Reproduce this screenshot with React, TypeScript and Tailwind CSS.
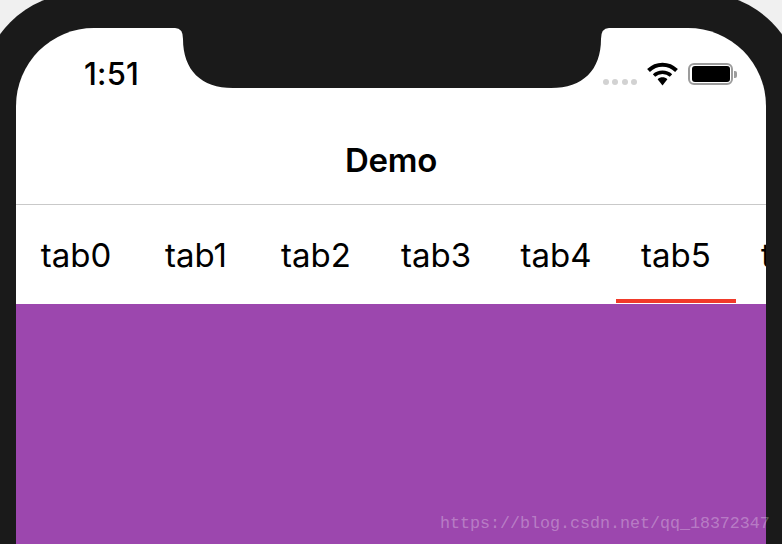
const tabs = ["tab0", "tab1", "tab2", "tab3", "tab4", "tab5", "tab6"];

function Wifi() {
  return (
    <svg width="31" height="24" viewBox="0 0 31 24" fill="none">
      <path d="M1.5 8.5C9.5 0.7 21.5 0.7 29.5 8.5" stroke="#000" strokeWidth="4" />
      <path d="M7 13.5C11.8 9.2 19.2 9.2 24 13.5" stroke="#000" strokeWidth="3.6" />
      <path d="M10.6 17.2L15.5 23.5L20.4 17.2C17.5 14.6 13.5 14.6 10.6 17.2Z" fill="#000" />
    </svg>
  );
}

function Notch() {
  return (
    <svg width="434" height="60" viewBox="0 0 434 60" className="absolute left-[159px] top-0">
      <path
        d="M0 0Q8 0 8 11C8 42 26 60 58 60L376 60C408 60 426 42 426 11Q426 0 434 0Z"
        fill="#1a1a1a"
      />
    </svg>
  );
}

export default function App() {
  return (
    <div
      className="relative h-[544px] w-[782px] overflow-hidden bg-[#f0f0f0]"
      style={{ fontFamily: "Inter, 'Liberation Sans', sans-serif" }}
    >
      <div className="-ml-[19px] -mt-[7px] h-[551px] w-[820px] rounded-t-[100px] bg-[#1a1a1a] pl-[35px] pr-[35px] pt-[35px]">
        <div className="relative flex h-[516px] w-[750px] flex-col overflow-hidden rounded-t-[78px] bg-white">
          <Notch />
          <div className="relative flex h-[60px] shrink-0 items-start justify-between pl-[68px] pr-[29px] pt-[28px]">
            <span className="text-[31px] font-medium leading-[36px] tracking-[0.2px] text-black">1:51</span>
            <div className="flex items-start">
              <div className="mt-[23px] flex gap-[3.4px]">
                <span className="h-[6px] w-[6px] rounded-full bg-[#d2d2d2]" />
                <span className="h-[6px] w-[6px] rounded-full bg-[#d2d2d2]" />
                <span className="h-[6px] w-[6px] rounded-full bg-[#d2d2d2]" />
                <span className="h-[6px] w-[6px] rounded-full bg-[#d2d2d2]" />
              </div>
              <div className="ml-[10px] mt-[6px]">
                <Wifi />
              </div>
              <div className="ml-[10px] mt-[7px] flex items-center">
                <div className="flex h-[22px] w-[45px] items-center justify-center rounded-[6px] border-2 border-[#9c9c9c]">
                  <div className="h-[16px] w-[38px] rounded-[3px] bg-black" />
                </div>
                <div className="ml-[1px] h-[7px] w-[3px] rounded-r-[2px] bg-[#9c9c9c]" />
              </div>
            </div>
          </div>
          <div className="flex h-[117px] shrink-0 items-center justify-center border-b border-[#c9c9c9] pt-[27px]">
            <span className="text-[33px] font-semibold leading-[40px] tracking-[-0.3px] text-black">Demo</span>
          </div>
          <div className="flex h-[99px] shrink-0 overflow-hidden">
            {tabs.map((t, i) => (
              <div key={t} className="relative flex h-full w-[120px] shrink-0 items-start justify-center pt-[30px]">
                <span className="text-[33px] leading-[40px] text-black">{t}</span>
                {i === 5 && <div className="absolute bottom-[1px] left-0 h-[4px] w-[120px] bg-[#f03a2a]" />}
              </div>
            ))}
          </div>
          <div className="flex-1 bg-[#9c47ae]" />
        </div>
      </div>
      <span
        className="absolute left-[440px] top-[513px] text-[16.67px] leading-[22px] text-white/30"
        style={{ fontFamily: "'Liberation Mono', monospace" }}
      >
        https://blog.csdn.net/qq_18372347
      </span>
    </div>
  );
}
